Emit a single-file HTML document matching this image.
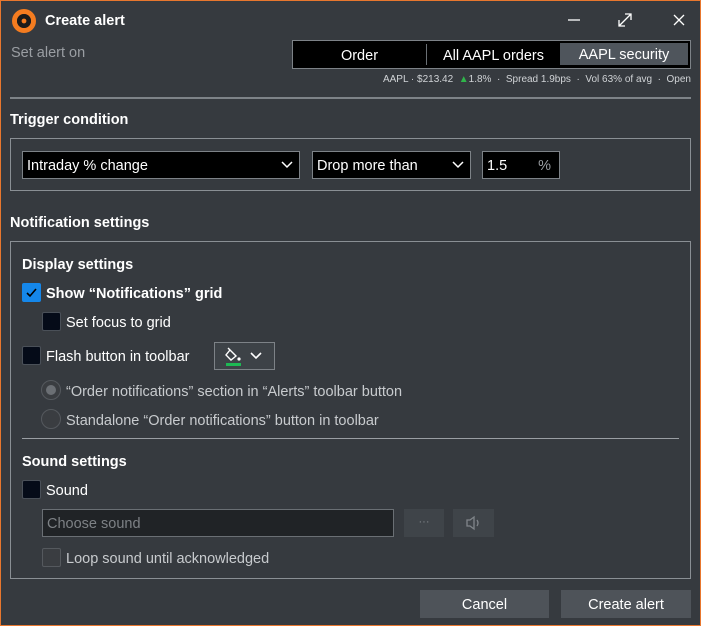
<!DOCTYPE html>
<html><head><meta charset="utf-8"><style>
*{box-sizing:border-box;margin:0;padding:0}
body{width:701px;height:626px;background:#363a3f;font-family:"Liberation Sans",sans-serif;color:#fff;position:relative;overflow:hidden;font-size:14.5px}
.frame{position:absolute;left:0;top:0;width:701px;height:626px;border:1px solid #e8772e;}
.a{position:absolute;white-space:nowrap}
.t{margin-top:1px}
.b{font-weight:bold}
.box{position:absolute;border:1px solid #8a8f94}
.inp{position:absolute;background:#000;border:1px solid #7d8287;height:28px;line-height:28px;padding-left:4px;font-size:14.5px}
.chev{position:absolute;right:6px;top:8px}
.cb{position:absolute;width:19px;height:19px;border:1px solid #4a5058;background:#050b18;border-radius:2px}
.rd{position:absolute;width:20px;height:20px;border-radius:50%;border:1px solid #55595e;background:#3a3d41}
.btn{position:absolute;background:#4e5359;height:28px;line-height:30px;text-align:center;font-size:14.5px;color:#fff}
</style></head><body>
<div class="frame"></div>
<svg class="a" style="left:11px;top:8px" width="26" height="26"><circle cx="13" cy="13" r="9.5" fill="none" stroke="#f47c20" stroke-width="5"/><circle cx="13" cy="13" r="7" fill="#1a1a1a"/><circle cx="13" cy="13" r="2.4" fill="#f47c20"/></svg>
<div class="a b" style="left:45px;top:13px;font-size:14.5px">Create alert</div>
<svg class="a" style="left:565px;top:12px" width="130" height="16"><line x1="3" y1="8" x2="15" y2="8" stroke="#fff" stroke-width="1.3"/><path d="M54 14 L66 2 M60 2 H66 V8 M54 8 V14 H60" stroke="#fff" stroke-width="1.3" fill="none"/><path d="M109 3 L119 13 M119 3 L109 13" stroke="#fff" stroke-width="1.3"/></svg>
<div class="a" style="left:11px;top:45px;color:#9a9ea3">Set alert on</div>
<div class="a" style="left:292px;top:40px;width:399px;height:29px;background:#000;border:1px solid #7d8287"></div>
<div class="a" style="left:293px;top:41px;width:133px;height:27px;line-height:30px;text-align:center">Order</div>
<div class="a" style="left:426px;top:44px;width:1px;height:21px;background:#6a6f74"></div>
<div class="a" style="left:427px;top:41px;width:133px;height:27px;line-height:30px;text-align:center">All AAPL orders</div>
<div class="a" style="left:560px;top:43px;width:128px;height:22px;background:#4f555c;line-height:25px;text-align:center">AAPL security</div>
<div class="a" style="right:10px;top:74px;font-size:10px;color:#d0d3d6">AAPL · $213.42 &nbsp;<span style="color:#2fb54a">▲</span>1.8% &nbsp;· &nbsp;Spread 1.9bps &nbsp;· &nbsp;Vol 63% of avg &nbsp;· &nbsp;Open</div>
<div class="a" style="left:10px;top:97px;width:681px;height:2px;background:#7e8388"></div>
<div class="a b" style="left:10px;top:112px">Trigger condition</div>
<div class="box" style="left:10px;top:138px;width:681px;height:53px"></div>
<div class="inp" style="left:22px;top:151px;width:278px">Intraday % change<svg class="chev" width="12" height="10"><path d="M1 2 L6 7 L11 2" stroke="#fff" stroke-width="1.5" fill="none"/></svg></div>
<div class="inp" style="left:312px;top:151px;width:159px">Drop more than<svg class="chev" width="12" height="10"><path d="M1 2 L6 7 L11 2" stroke="#fff" stroke-width="1.5" fill="none"/></svg></div>
<div class="inp" style="left:482px;top:151px;width:78px">1.5<span style="position:absolute;right:8px;color:#9a9ea3">%</span></div>
<div class="a b" style="left:10px;top:215px">Notification settings</div>
<div class="box" style="left:10px;top:241px;width:681px;height:338px"></div>
<div class="a b" style="left:22px;top:257px">Display settings</div>
<div class="cb" style="left:22px;top:283px;background:#1587ea;border-color:#1587ea"><svg width="17" height="17" style="position:absolute;left:0;top:0"><path d="M4 9 L7 12 L13 5" stroke="#000" stroke-width="1.6" fill="none"/></svg></div>
<div class="a b" style="left:46px;top:286px">Show “Notifications” grid</div>
<div class="cb" style="left:42px;top:312px"></div>
<div class="a" style="left:66px;top:315px">Set focus to grid</div>
<div class="cb" style="left:22px;top:346px"></div>
<div class="a" style="left:46px;top:349px">Flash button in toolbar</div>
<div class="a" style="left:214px;top:342px;width:61px;height:28px;background:#3d4247;border:1px solid #7d8287">
<svg width="60" height="26" style="position:absolute;left:0;top:0"><path d="M15 7 L21 13 L16 17 L11 12 Z" fill="none" stroke="#fff" stroke-width="1.4"/><path d="M13 5 L15 7" stroke="#fff" stroke-width="1.4"/><circle cx="24" cy="16" r="1.6" fill="#fff"/><rect x="11" y="20" width="15" height="3" fill="#1db954"/><path d="M36 10 L41 15 L46 10" stroke="#fff" stroke-width="1.6" fill="none"/></svg></div>
<div class="rd" style="left:41px;top:380px"><div style="position:absolute;left:4px;top:4px;width:10px;height:10px;border-radius:50%;background:#6b6f74"></div></div>
<div class="a" style="left:66px;top:384px;color:#c8cbce">“Order notifications” section in “Alerts” toolbar button</div>
<div class="rd" style="left:41px;top:409px"></div>
<div class="a" style="left:66px;top:413px;color:#c8cbce">Standalone “Order notifications” button in toolbar</div>
<div class="a" style="left:22px;top:438px;width:657px;height:1px;background:#9a9ea3"></div>
<div class="a b" style="left:22px;top:454px">Sound settings</div>
<div class="cb" style="left:22px;top:480px"></div>
<div class="a" style="left:46px;top:483px">Sound</div>
<div class="a" style="left:42px;top:509px;width:352px;height:28px;background:#202326;border:1px solid #6a6f74;line-height:28px;padding-left:4px;color:#7d8185">Choose sound</div>
<div class="a" style="left:404px;top:509px;width:40px;height:28px;background:#3f4449;text-align:center;line-height:26px;color:#80858a;font-size:11px">···</div>
<div class="a" style="left:453px;top:509px;width:41px;height:28px;background:#3f4449"><svg width="41" height="28"><path d="M14 11 H17 L21 8 V20 L17 17 H14 Z" fill="none" stroke="#80858a" stroke-width="1.3"/><path d="M24 11 Q26 14 24 17" fill="none" stroke="#80858a" stroke-width="1.3"/></svg></div>
<div class="cb" style="left:42px;top:548px;background:#3a3d41;border-color:#55595e"></div>
<div class="a" style="left:66px;top:551px;color:#c8cbce">Loop sound until acknowledged</div>
<div class="btn" style="left:420px;top:590px;width:129px">Cancel</div>
<div class="btn" style="left:561px;top:590px;width:130px">Create alert</div>
</body></html>
